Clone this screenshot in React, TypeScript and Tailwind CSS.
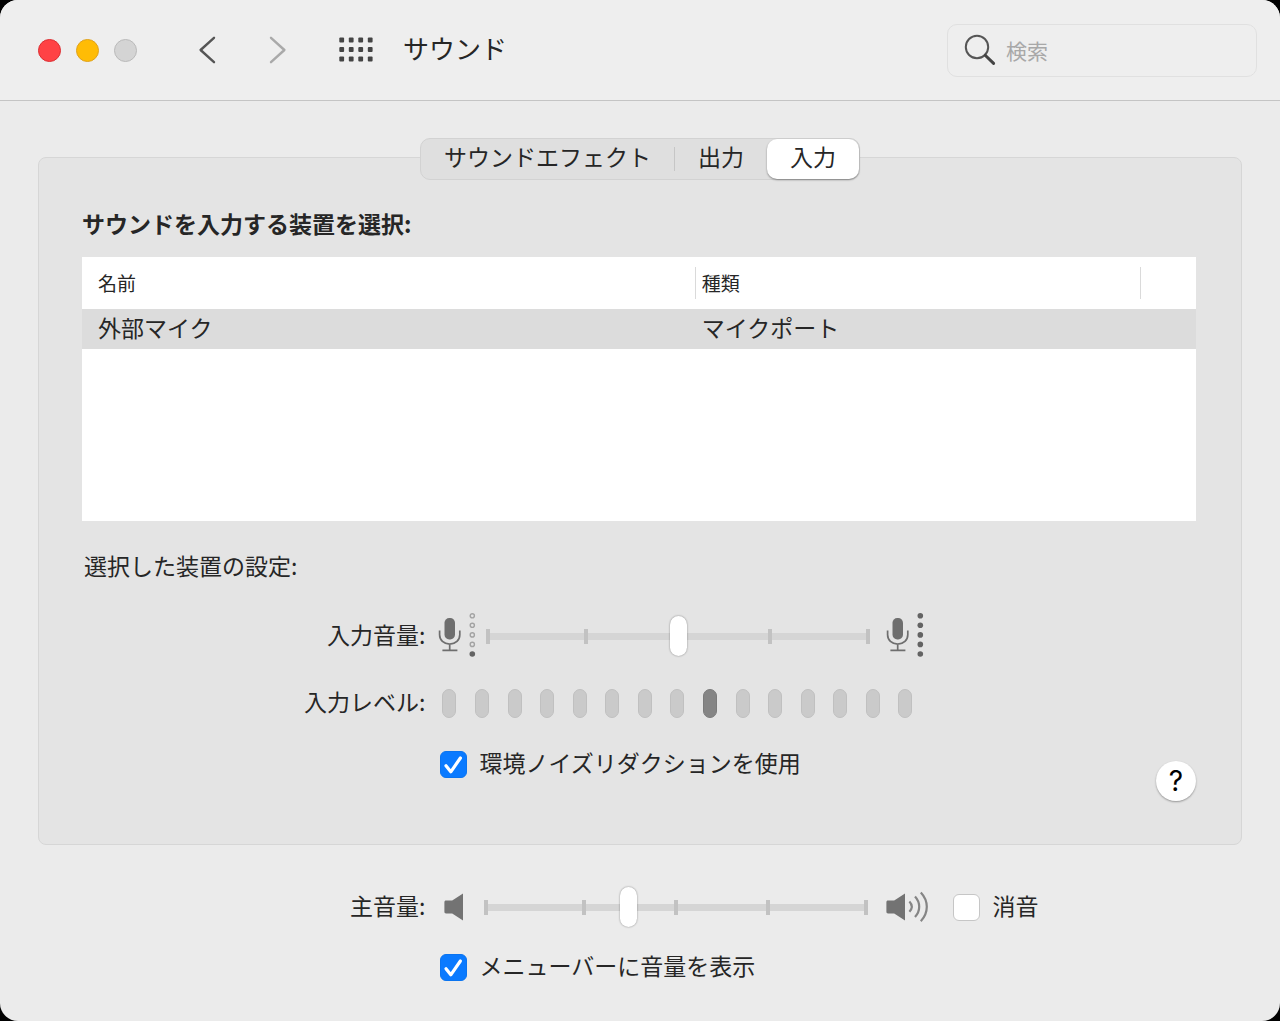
import { useState } from 'react';
import type { ReactNode } from 'react';

const tabs = ['サウンドエフェクト', '出力', '入力'];

const LEVEL_COUNT = 15;
const ACTIVE_LEVEL = 8;

function MicIcon({ full }: { full?: boolean }) {
  return (
    <svg className="h-11 w-9 shrink-0 overflow-visible" viewBox="0 0 36 44" fill="none" aria-hidden="true">
      <rect x="4.5" y="4" width="10.5" height="21.5" rx="4.8" fill="#6e6e6e" />
      <path
        d="M-.4 16.5v4.2c0 5.4 4.2 9.4 10.1 9.4s10.1-4 10.1-9.4v-4.2M9.7 30.1v5.6M2.4 36.3h15"
        stroke="#6e6e6e"
        strokeWidth="1.7"
      />
      {[1.8, 11.3, 20.9, 30.4, 40].map((y) =>
        full || y === 40 ? (
          <circle key={y} cx="32.3" cy={y} r="2.8" fill="#636363" />
        ) : (
          <circle key={y} cx="32.3" cy={y} r="2.1" stroke="#a3a3a3" strokeWidth="1.4" />
        )
      )}
    </svg>
  );
}

function SpeakerIcon({ loud }: { loud?: boolean }) {
  return (
    <svg
      className={loud ? 'h-11 w-11 shrink-0' : 'h-11 w-9 shrink-0'}
      viewBox={loud ? '0 0 44 44' : '-4 0 36 44'}
      fill="none"
      aria-hidden="true"
    >
      <path d="M2 15.6h6.2L19 8.4v27.2L8.2 28.4H2c-1 0-1.6-.6-1.6-1.6v-9.6c0-1 .6-1.6 1.6-1.6z" fill="#737373" />
      {loud && (
        <g stroke="#858585" strokeWidth="2.2">
          <path d="M23.4 16.6c3 3.2 3 7 0 10.2" />
          <path d="M29 11.6c5.6 6 5.6 14.4 0 20.4" />
          <path d="M34.8 7.4c8 8.4 8 20.4 0 28.8" />
        </g>
      )}
    </svg>
  );
}

function Slider({ id, initial }: { id: string; initial: number }) {
  const [value, setValue] = useState(initial);

  return (
    <div className="grid w-96 items-center">
      <div className="col-start-1 row-start-1 mx-1 h-[7px] bg-[#d5d5d5]" />
      {/* The outer steps are a little wider than the inner ones */}
      <div className="col-start-1 row-start-1 grid grid-cols-[98fr_92fr_92fr_98fr_4px]">
        {[0, 1, 2, 3, 4].map((n) => (
          <span key={n} className="h-[15px] w-1 bg-[#c2c2c2]" />
        ))}
      </div>
      <input
        id={id}
        type="range"
        min={0}
        max={100}
        value={value}
        onChange={(e) => setValue(Number(e.target.value))}
        className="col-start-1 row-start-1 h-10 w-full appearance-none bg-transparent [&::-webkit-slider-thumb]:h-10 [&::-webkit-slider-thumb]:w-[17px] [&::-webkit-slider-thumb]:appearance-none [&::-webkit-slider-thumb]:rounded-full [&::-webkit-slider-thumb]:bg-white [&::-webkit-slider-thumb]:shadow-[0_0_2px_rgba(0,0,0,0.45)]"
      />
    </div>
  );
}

function Checkbox({ checked, children }: { checked?: boolean; children: ReactNode }) {
  return (
    <label className="flex items-center gap-3">
      <span className="grid">
        <input
          type="checkbox"
          defaultChecked={checked}
          className="peer col-start-1 row-start-1 size-[27px] appearance-none rounded-md border border-[#c6c6c6] bg-white checked:border-[#0a74f0] checked:bg-[#0a7aff]"
        />
        <svg
          className="pointer-events-none invisible col-start-1 row-start-1 size-[27px] peer-checked:visible"
          viewBox="0 0 27 27"
          fill="none"
          aria-hidden="true"
        >
          <path d="M6 14.8l4.8 6L20.4 7" stroke="#fff" strokeWidth="3.2" strokeLinecap="round" strokeLinejoin="round" />
        </svg>
      </span>
      <span className="pb-1 leading-7">{children}</span>
    </label>
  );
}

export default function App() {
  const [activeTab, setActiveTab] = useState('入力');

  return (
    <div className="min-h-screen bg-black">
      <main className="flex min-h-screen flex-col overflow-hidden rounded-[18px] bg-[#ebebeb] font-['Noto_Sans_CJK_JP',sans-serif] text-[23px] leading-8 text-[#262626]">
        {/* Title bar */}
        <header className="flex h-[101px] items-center border-b border-[#c4c4c4] bg-[#eeeeee] pr-[23px] pl-[38px]">
          <div className="flex gap-[15px]">
            <button aria-label="閉じる" className="size-[23px] rounded-full border border-[#dc2f33] bg-[#ff4245]" />
            <button aria-label="しまう" className="size-[23px] rounded-full border border-[#e0a21c] bg-[#ffbc05]" />
            <button aria-label="拡大" className="size-[23px] rounded-full border border-[#bababa] bg-[#d4d4d4]" />
          </div>
          <nav className="ml-[61px] flex items-center">
            <button aria-label="戻る">
              <svg className="h-7 w-[18px]" viewBox="0 0 18 28" fill="none">
                <path d="M16 1.8L2.6 14 16 26.2" stroke="#555" strokeWidth="2.4" strokeLinecap="round" strokeLinejoin="round" />
              </svg>
            </button>
            <button aria-label="進む" className="ml-[53px]">
              <svg className="h-7 w-[18px]" viewBox="0 0 18 28" fill="none">
                <path d="M2 1.8L15.4 14 2 26.2" stroke="#a9a9a9" strokeWidth="2.4" strokeLinecap="round" strokeLinejoin="round" />
              </svg>
            </button>
            <button aria-label="すべてを表示" className="ml-[52px]">
              <svg className="h-7 w-[34px]" viewBox="0 0 34 28" fill="#444">
                {[4, 13.5, 23].map((y) =>
                  [2.7, 12.2, 21.7, 31.2].map((x) => (
                    <rect key={`${x}-${y}`} x={x - 2.4} y={y - 2.4} width="4.8" height="4.8" rx="1" />
                  ))
                )}
              </svg>
            </button>
          </nav>
          <h1 className="ml-[30px] pb-1 text-[26px]">サウンド</h1>
          <label className="ml-auto flex h-[53px] w-[310px] items-center gap-2.5 rounded-[10px] border border-[#e0e0e0] px-4">
            <svg className="size-8 shrink-0" viewBox="0 0 32 32" fill="none" aria-hidden="true">
              <circle cx="13" cy="13" r="11.2" stroke="#555" strokeWidth="2" />
              <path d="M21.2 21.2l8.4 8.2" stroke="#444" strokeWidth="3" strokeLinecap="round" />
            </svg>
            <input
              type="search"
              aria-label="検索"
              placeholder="検索"
              className="w-full min-w-0 bg-transparent text-[21px] outline-none placeholder:text-[#a8a8a8]"
            />
          </label>
        </header>

        <div className="px-[38px] pt-[37px]">
          {/* Tabs sit on the top edge of the panel */}
          <div
            role="tablist"
            className="relative z-10 mx-auto flex h-[42px] w-fit items-center rounded-[10px] border border-[#d2d2d2] bg-[#dfdfdf]"
          >
            {tabs.map((tab, i) => (
              <div key={tab} className="flex h-full items-center">
                {i === 1 && <span className="h-6 w-px bg-[#c6c6c6]" />}
                <button
                  role="tab"
                  aria-selected={tab === activeTab}
                  onClick={() => setActiveTab(tab)}
                  className={
                    tab === activeTab
                      ? 'h-full rounded-[10px] bg-white px-[23px] pb-1.5 shadow-[0_1px_2px_rgba(0,0,0,0.4)]'
                      : 'h-full px-[23px] pb-1.5'
                  }
                >
                  {tab}
                </button>
              </div>
            ))}
          </div>

          <section className="-mt-[23px] rounded-lg border border-[#d6d6d6] bg-[#e4e4e4] pt-[49px] pr-[45px] pb-[43px] pl-[43px]">
            <h2 className="font-bold">サウンドを入力する装置を選択:</h2>
            <div className="mt-[18px] h-66 bg-white">
              <table className="w-full table-fixed text-left">
                <thead>
                  <tr className="h-[52px] text-[19px]">
                    <th className="w-[55%] pl-4 font-normal">名前</th>
                    <th className="w-[40%] font-normal">
                      <div className="border-l border-[#dadada] pl-1.5">種類</div>
                    </th>
                    <td>
                      <div className="h-8 border-l border-[#dadada]" />
                    </td>
                  </tr>
                </thead>
                <tbody>
                  <tr className="h-10 bg-[#dcdcdc]">
                    <td className="pb-1 pl-4">外部マイク</td>
                    <td className="pb-1 pl-[7px]">マイクポート</td>
                    <td />
                  </tr>
                </tbody>
              </table>
            </div>

            <h3 className="mt-7 pl-0.5">選択した装置の設定:</h3>
            <div className="mt-[33px] grid grid-cols-[5fr_11fr] gap-x-[15px] gap-y-[29px]">
              <label htmlFor="input-volume" className="self-center pb-1 text-right leading-7">
                入力音量:
              </label>
              <div className="flex items-center">
                <MicIcon />
                <div className="mr-[18px] ml-2.5">
                  <Slider id="input-volume" initial={50} />
                </div>
                <MicIcon full />
              </div>

              <span id="level-label" className="self-center pb-1 text-right leading-7">
                入力レベル:
              </span>
              <div
                role="meter"
                aria-labelledby="level-label"
                aria-valuemin={0}
                aria-valuemax={LEVEL_COUNT}
                aria-valuenow={ACTIVE_LEVEL + 1}
                className="ml-0.5 flex w-[470px] items-center justify-between"
              >
                {Array.from({ length: LEVEL_COUNT }, (_, i) => (
                  <span
                    key={i}
                    className={
                      i === ACTIVE_LEVEL
                        ? 'h-[29px] w-3.5 rounded-full border border-[#7b7b7b] bg-[#858585]'
                        : 'h-[29px] w-3.5 rounded-full border border-[#c0c0c0] bg-[#cacaca]'
                    }
                  />
                ))}
              </div>

              <div className="col-start-2 flex items-start justify-between">
                <Checkbox checked>環境ノイズリダクションを使用</Checkbox>
                <button
                  aria-label="ヘルプ"
                  className="mt-[13px] size-10 rounded-full bg-white font-['Inter',sans-serif] text-[28px] leading-10 text-black shadow-[0_1px_2px_rgba(0,0,0,0.35)]"
                >
                  ?
                </button>
              </div>
            </div>
          </section>
        </div>

        {/* Output volume */}
        <footer className="grid grid-cols-[5fr_11fr] gap-x-[15px] gap-y-[22px] pt-10 pr-[84px] pb-9 pl-[82px]">
          <label htmlFor="main-volume" className="self-center pb-1 text-right leading-7">
            主音量:
          </label>
          <div className="flex items-center">
            <SpeakerIcon />
            <div className="mr-[18px] ml-2">
              <Slider id="main-volume" initial={37} />
            </div>
            <SpeakerIcon loud />
            <div className="ml-[23px]">
              <Checkbox>消音</Checkbox>
            </div>
          </div>
          <div className="col-start-2">
            <Checkbox checked>メニューバーに音量を表示</Checkbox>
          </div>
        </footer>
      </main>
    </div>
  );
}
